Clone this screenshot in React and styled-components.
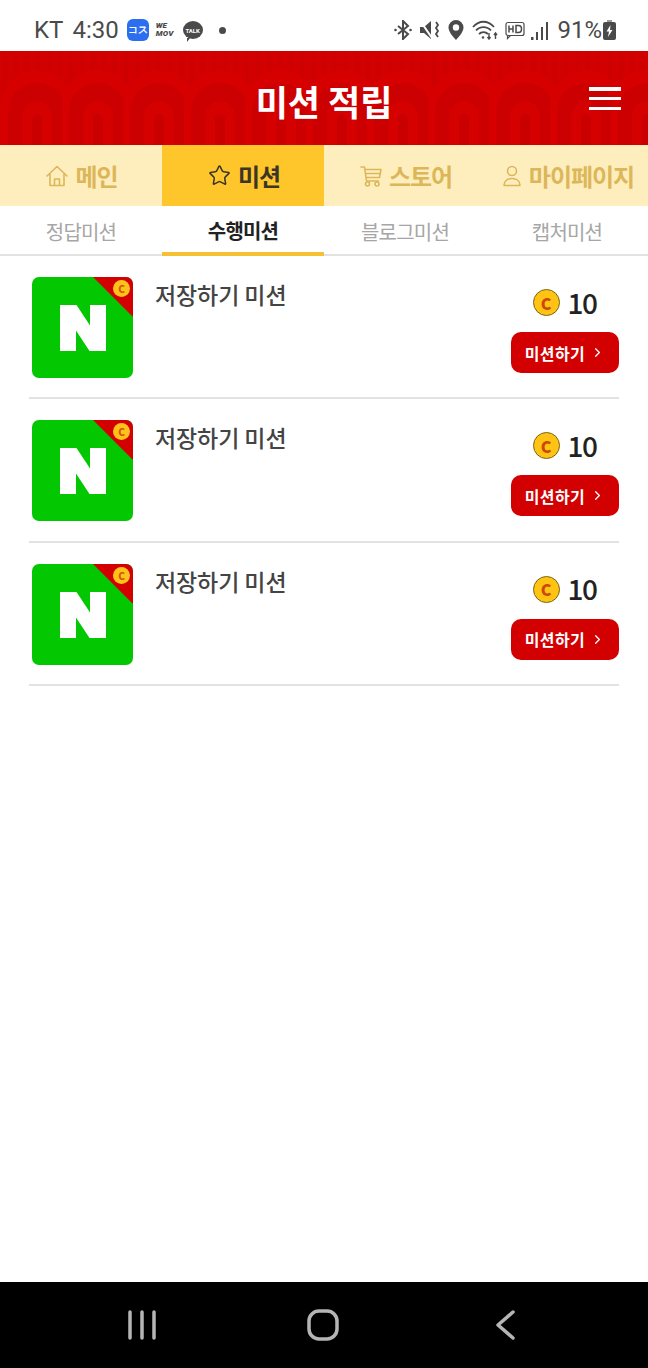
import React from 'react'
import styled, { createGlobalStyle } from 'styled-components'
import { Star, ChevronRight } from 'lucide-react'

const GlobalStyle = createGlobalStyle`
  html, body {
    margin: 0;
    padding: 0;
    background: #fff;
  }
  body {
    font-family: "Noto Sans CJK KR", "Noto Sans", sans-serif;
  }
  * {
    box-sizing: border-box;
  }
`

const Page = styled.div`
  width: 648px;
  height: 1368px;
  display: flex;
  flex-direction: column;
  background: #fff;
  overflow: hidden;
`

const StatusBar = styled.div`
  height: 51px;
  flex-shrink: 0;
  padding: 9px 32px 0 34px;
  display: flex;
  align-items: center;
  justify-content: space-between;
  color: #4a4a4a;
  font-family: Roboto, sans-serif;
  font-size: 24px;
`

const StatusGroup = styled.div`
  display: flex;
  align-items: center;
`

const StatusText = styled.span`
  margin-right: ${(p) => p.$gap || 0}px;
  line-height: 1;
`

const AppBadge = styled.div`
  width: 22px;
  height: 22px;
  border-radius: 6px;
  background: #2b6ff0;
  color: #fff;
  font-size: 10px;
  font-weight: 700;
  display: flex;
  align-items: center;
  justify-content: center;
  margin: 0 7px 0 8px;
`

const MovText = styled.div`
  font-size: 8px;
  font-weight: 900;
  font-style: italic;
  line-height: 8px;
  width: 20px;
  margin-right: 7px;
  letter-spacing: 0.2px;
`

const Talk = styled.div`
  position: relative;
  width: 20px;
  height: 18px;
  border-radius: 50%;
  background: #4a4a4a;
  color: #fff;
  font-size: 6px;
  font-weight: 700;
  display: flex;
  align-items: center;
  justify-content: center;
  margin-right: 16px;

  &::after {
    content: '';
    position: absolute;
    left: 4px;
    bottom: -3px;
    border-left: 3px solid #4a4a4a;
    border-right: 2px solid transparent;
    border-bottom: 4px solid transparent;
  }
`

const Dot = styled.div`
  width: 7px;
  height: 7px;
  border-radius: 50%;
  background: #4a4a4a;
`

const StatusIcon = styled.svg`
  display: block;
  margin-right: ${(p) => p.$gap || 0}px;
  margin-left: ${(p) => p.$lead || 0}px;
`

const Header = styled.header`
  position: relative;
  height: 94px;
  flex-shrink: 0;
  background: #d20000;
  display: flex;
  align-items: center;
  justify-content: center;
  overflow: hidden;
`

const Pattern = styled.svg`
  position: absolute;
  inset: 0;
  width: 100%;
  height: 100%;
`

const Title = styled.h1`
  position: relative;
  top: 2px;
  margin: 0;
  color: #fff;
  font-size: 35px;
  font-weight: 700;
  line-height: 1;
`

const MenuButton = styled.div`
  position: absolute;
  right: 27px;
  top: 36px;
  width: 32px;
  height: 23px;
  display: flex;
  flex-direction: column;
  justify-content: space-between;

  span {
    display: block;
    height: 3.5px;
    background: #fff;
  }
`

const MainNav = styled.nav`
  height: 61px;
  flex-shrink: 0;
  display: grid;
  grid-template-columns: repeat(4, 162px);
  background: #ffeebd;
`

const MainTab = styled.div`
  display: flex;
  align-items: center;
  justify-content: center;
  gap: 7px;
  padding-left: 2px;
  background: ${(p) => (p.$active ? '#ffc62b' : 'transparent')};
  color: ${(p) => (p.$active ? '#3b3526' : '#dcb759')};
  font-size: 24px;
  font-weight: 700;
  white-space: nowrap;
  letter-spacing: -1px;
  line-height: 1;
`

const TabIcon = styled.svg`
  display: block;
  flex-shrink: 0;
  fill: none;
  stroke: currentColor;
  stroke-width: 1.6;
  stroke-linejoin: round;
  stroke-linecap: round;
`

const SubNav = styled.div`
  height: 50px;
  flex-shrink: 0;
  display: grid;
  grid-template-columns: repeat(4, 162px);
  border-bottom: 2px solid #e2e2e2;
`

const SubTab = styled.div`
  height: 50px;
  display: flex;
  align-items: center;
  justify-content: center;
  color: ${(p) => (p.$active ? '#222' : '#a6a6a6')};
  font-size: 20px;
  font-weight: ${(p) => (p.$active ? 700 : 400)};
  letter-spacing: -0.8px;
  border-bottom: ${(p) => (p.$active ? '4px solid #f5c033' : 'none')};
  padding-top: ${(p) => (p.$active ? 3 : 0)}px;
`

const MissionList = styled.div`
  flex: 1;
  padding: 0 29px;
`

const MissionRow = styled.div`
  height: 143.4px;
  display: flex;
  padding: 21px 0 0 3px;
  border-bottom: 2px solid #e2e2e2;
`

const Thumb = styled.div`
  position: relative;
  width: 101px;
  height: 101px;
  flex-shrink: 0;
  border-radius: 7px;
  background: #03c700;
  overflow: hidden;
  margin-right: 22px;
`

const Corner = styled.div`
  position: absolute;
  top: 0;
  right: 0;
  width: 0;
  height: 0;
  border-top: 40px solid #d20000;
  border-left: 40px solid transparent;
`

const SmallCoin = styled.div`
  position: absolute;
  top: 3px;
  right: 3px;
  width: 17px;
  height: 17px;
  border-radius: 50%;
  background: #ffc21a;
  color: #d2570a;
  font-size: 10px;
  font-weight: 900;
  display: flex;
  align-items: center;
  justify-content: center;
`

const LogoMark = styled.svg`
  position: absolute;
  left: 28px;
  top: 28px;
`

const MissionName = styled.div`
  flex: 1;
  color: #444;
  font-size: 23px;
  font-weight: 500;
  line-height: 34px;
  letter-spacing: -0.1px;
`

const RewardColumn = styled.div`
  width: 108px;
  display: flex;
  flex-direction: column;
  align-items: center;
`

const Reward = styled.div`
  height: 55px;
  padding-bottom: 4px;
  display: flex;
  align-items: center;
  gap: 8px;
  color: #222;
  font-size: 28px;
  font-weight: 500;
  letter-spacing: -1.5px;
  margin-right: 1px;
`

const Amount = styled.span`
  position: relative;
  top: -1px;
`

const Coin = styled.div`
  width: 27px;
  height: 27px;
  border-radius: 50%;
  background: #ffc313;
  border: 1px solid #7a6414;
  color: #c9480a;
  font-size: 16px;
  font-weight: 900;
  letter-spacing: 0;
  display: flex;
  align-items: center;
  justify-content: center;
  line-height: 1;
`

const MissionButton = styled.button`
  width: 108px;
  height: 41px;
  border: 0;
  border-radius: 10px;
  background: #d20000;
  color: #fff;
  font-family: inherit;
  font-size: 16px;
  font-weight: 700;
  letter-spacing: 0.4px;
  display: flex;
  align-items: center;
  justify-content: center;
  gap: 5px;
  padding: 0;
`

const SystemBar = styled.div`
  height: 86px;
  flex-shrink: 0;
  background: #000;
  display: flex;
  align-items: center;
  padding-left: 128px;
`

const SystemIcon = styled.svg`
  display: block;
  margin-left: ${(p) => p.$lead || 0}px;
  stroke: #b5b5b5;
  stroke-width: 3.5;
  stroke-linecap: round;
  stroke-linejoin: round;
  fill: none;
`

// 헤더 배경 아치 무늬
const Arches = () => {
  const archCount = Array.from({ length: 11 })
  return (
    <Pattern viewBox="0 0 648 94">
      <g fill="#cb0000" opacity="0.5">
        {Array.from({ length: 60 }).map((_, i) => (
          <rect key={i} x={i * 11 + 3} y="0" width="4" height="94" />
        ))}
      </g>
      {archCount.map((_, i) => {
        const cx = 37 + i * 61
        return (
          <g key={i}>
            <path d={`M${cx - 36} 94V55a36 36 0 0 1 72 0V94z`} fill="#d60000" />
            <path d={`M${cx - 29} 94V61a29 29 0 0 1 58 0V94z`} fill="#cc0000" />
            <path d={`M${cx - 15} 94V65a15 15 0 0 1 30 0V94z`} fill="#d50000" />
            <path d={`M${cx - 5} 94V68a5 5 0 0 1 10 0V94z`} fill="#ca0000" />
          </g>
        )
      })}
    </Pattern>
  )
}

const missions = [1, 2, 3]
const subTabs = ['정답미션', '수행미션', '블로그미션', '캡처미션']

const App = () => {
  return (
    <Page>
      <GlobalStyle />
      <StatusBar>
        <StatusGroup>
          <StatusText $gap={9}>KT</StatusText>
          <StatusText>4:30</StatusText>
          <AppBadge>コス</AppBadge>
          <MovText>WE<br />MOV</MovText>
          <Talk>TALK</Talk>
          <Dot />
        </StatusGroup>
        <StatusGroup>
          <StatusIcon $gap={8} width="18" height="20" viewBox="0 0 18 20" fill="none" stroke="#4a4a4a" strokeWidth="2">
            <path d="M4 6l10 8-5 5V1l5 5-10 8" />
            <circle cx="1.500" cy="10" r="1.300" fill="#4a4a4a" stroke="none" />
            <circle cx="16.500" cy="10" r="1.300" fill="#4a4a4a" stroke="none" />
          </StatusIcon>
          <StatusIcon $gap={8} width="20" height="20" viewBox="0 0 20 20">
            <path d="M0 7h4l7-6v18l-7-6H0z" fill="#4a4a4a" />
            <path d="M1 2l11 16" stroke="#fff" strokeWidth="2" />
            <path d="M16 2l2 3-2 3 2 3-2 3 2 3" fill="none" stroke="#4a4a4a" strokeWidth="1.800" />
          </StatusIcon>
          <StatusIcon $gap={8} width="16" height="20" viewBox="0 0 16 20">
            <path fillRule="evenodd" d="M8 0a7.500 7.500 0 0 1 7.500 7.500C15.500 12 10 18 8 20 6 18 .5 12 .5 7.500A7.500 7.500 0 0 1 8 0zm0 4.300a3.200 3.200 0 1 0 0 6.400 3.200 3.200 0 0 0 0-6.400z" fill="#4a4a4a" />
          </StatusIcon>
          <StatusIcon $gap={6} width="27" height="20" viewBox="0 0 27 20" fill="none" stroke="#4a4a4a" strokeWidth="1.800">
            <path d="M1 7c6-7 15-7 21 0M4 10.500c4-4.500 11-4.500 15 0M7 14c2.500-2.500 6.500-2.500 9 0" />
            <path d="M17 13v6M15.500 17l1.500 2 1.500-2M23.500 19v-6M22 15l1.500-2 1.500 2" strokeWidth="1.400" />
            <circle cx="11" cy="17.500" r="1.200" fill="#4a4a4a" stroke="none" />
          </StatusIcon>
          <StatusIcon $gap={6} width="20" height="20" viewBox="0 0 20 20">
            <rect x="1" y="2.500" width="18" height="13" rx="2" fill="none" stroke="#4a4a4a" strokeWidth="1.200" />
            <path d="M2.500 15.500v3l3-3" fill="none" stroke="#4a4a4a" strokeWidth="1.200" />
            <path d="M4 5.500v7M4 9h4M8 5.500v7M11 5.500v7h2.500c2 0 3-1.500 3-3.500s-1-3.500-3-3.500z" fill="none" stroke="#4a4a4a" strokeWidth="1.500" />
          </StatusIcon>
          <StatusIcon $gap={9} width="17" height="19" viewBox="0 0 17 19" fill="#4a4a4a">
            <rect x="0" y="16" width="2.500" height="3" />
            <rect x="5" y="11" width="2" height="8" />
            <rect x="10" y="6" width="2" height="13" />
            <rect x="15" y="1" width="2" height="18" />
          </StatusIcon>
          <StatusText>91%</StatusText>
          <StatusIcon $lead={1} width="13" height="20" viewBox="0 0 13 20">
            <rect x="4" y="0" width="5" height="3" fill="#9a9a9a" />
            <rect x="0" y="2" width="13" height="18" rx="2" fill="#4a4a4a" />
            <path d="M7.500 5L3.500 11.500h2.500L5 17l4.500-7H7z" fill="#fff" />
          </StatusIcon>
        </StatusGroup>
      </StatusBar>

      <Header>
        <Arches />
        <Title>미션 적립</Title>
        <MenuButton>
          <span />
          <span />
          <span />
        </MenuButton>
      </Header>

      <MainNav>
        <MainTab>
          <TabIcon width="22" height="22" viewBox="0 0 22 22">
            <path d="M1 11L11 1.500 21 11M4 9v11.500h14V9M8.500 20.500v-6.500h5v6.500" />
          </TabIcon>
          메인
        </MainTab>
        <MainTab $active>
          <Star size={23} strokeWidth={1.6} />
          미션
        </MainTab>
        <MainTab>
          <TabIcon width="22" height="22" viewBox="0 0 22 22">
            <path d="M1 2h3.500l2 14h12M5 4.500h16l-1.500 8H6.200M5.600 8.500H20" />
            <circle cx="7.500" cy="19" r="2" />
            <circle cx="17" cy="19" r="2" />
          </TabIcon>
          스토어
        </MainTab>
        <MainTab>
          <TabIcon width="20" height="22" viewBox="0 0 20 22">
            <circle cx="10" cy="6" r="4.500" />
            <path d="M2 20.500c0-4.500 3.500-7 8-7s8 2.500 8 7z" />
          </TabIcon>
          마이페이지
        </MainTab>
      </MainNav>

      <SubNav>
        {subTabs.map((label, i) => (
          <SubTab key={label} $active={i === 1}>{label}</SubTab>
        ))}
      </SubNav>

      <MissionList>
        {missions.map((id) => (
          <MissionRow key={id}>
            <Thumb>
              <LogoMark width="46" height="46" viewBox="0 0 46 46">
                <path d="M0 0h16.500L30 20.500V0h16v46H29.500L16 25.500V46H0z" fill="#fff" />
              </LogoMark>
              <Corner />
              <SmallCoin>C</SmallCoin>
            </Thumb>
            <MissionName>저장하기 미션</MissionName>
            <RewardColumn>
              <Reward>
                <Coin>C</Coin>
                <Amount>10</Amount>
              </Reward>
              <MissionButton>
                미션하기
                <ChevronRight size={15} strokeWidth={2} />
              </MissionButton>
            </RewardColumn>
          </MissionRow>
        ))}
      </MissionList>

      <SystemBar>
        <SystemIcon width="28" height="30" viewBox="0 0 28 30">
          <path d="M2 2v26M14 2v26M26 2v26" />
        </SystemIcon>
        <SystemIcon $lead={151} width="32" height="32" viewBox="0 0 32 32">
          <rect x="2" y="2" width="28" height="28" rx="10" />
        </SystemIcon>
        <SystemIcon $lead={157} width="20" height="30" viewBox="0 0 20 30">
          <path d="M17 2L2 15l15 13" />
        </SystemIcon>
      </SystemBar>
    </Page>
  )
}

export default App
